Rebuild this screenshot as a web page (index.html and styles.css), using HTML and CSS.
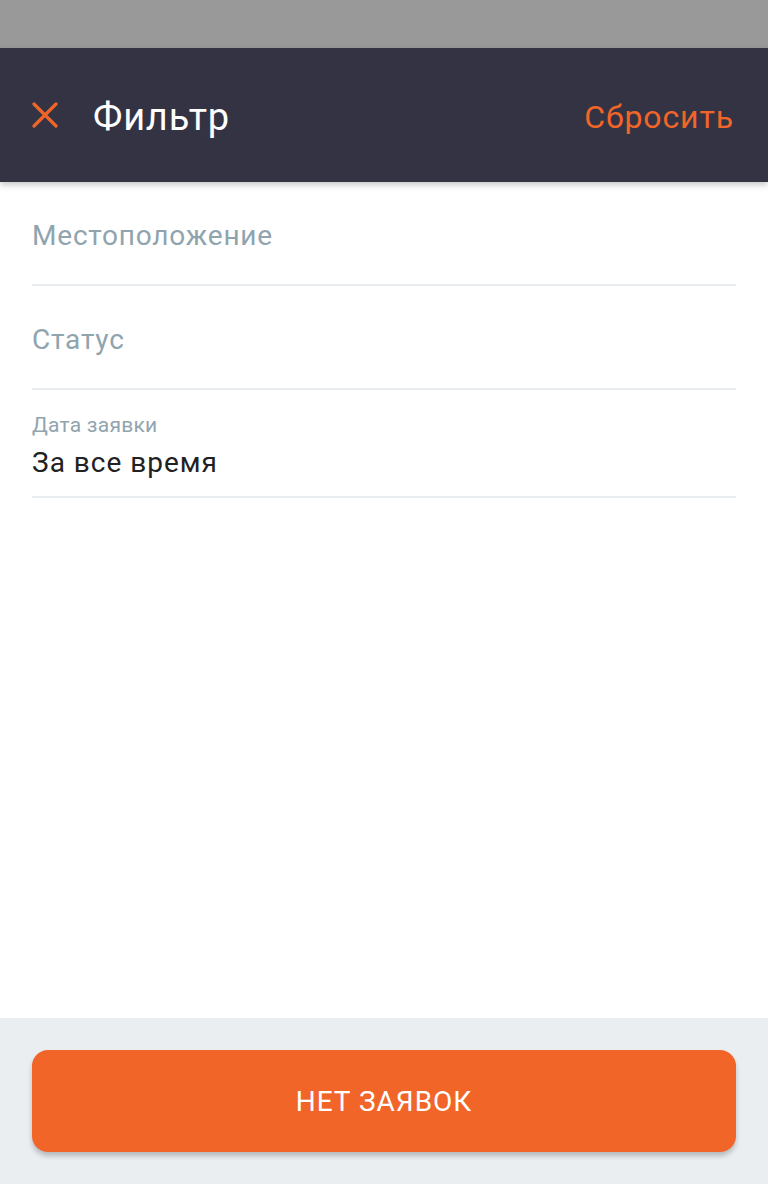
FILE: index.html
```html
<!DOCTYPE html>
<html lang="ru">
<head>
<meta charset="utf-8">
<link rel="stylesheet" href="styles.css">
</head>
<body>
<div class="screen">
  <div class="statusbar"></div>
  <header class="appbar">
    <div class="appbar-left">
      <svg class="close-icon" width="26" height="26" viewBox="0 0 26 26" aria-hidden="true">
        <path d="M2 2 L24 24 M24 2 L2 24" stroke="#f26529" stroke-width="3.2" stroke-linecap="round" fill="none"/>
      </svg>
      <h1 class="title">Фильтр</h1>
    </div>
    <button class="reset">Сбросить</button>
  </header>
  <main class="content">
    <div class="field">
      <span class="placeholder">Местоположение</span>
    </div>
    <div class="field">
      <span class="placeholder">Статус</span>
    </div>
    <div class="field field-filled">
      <span class="label">Дата заявки</span>
      <span class="value">За все время</span>
    </div>
  </main>
  <footer class="footer">
    <button class="primary">НЕТ ЗАЯВОК</button>
  </footer>
</div>
</body>
</html>
```
FILE: styles.css
```css
* { box-sizing: border-box; }
html, body {
  margin: 0;
  padding: 0;
  width: 768px;
  height: 1184px;
  overflow: hidden;
  font-family: Roboto, "Noto Sans", sans-serif;
  background: #ffffff;
}
.screen {
  display: flex;
  flex-direction: column;
  height: 1184px;
}
.statusbar {
  height: 48px;
  background: #999999;
  flex: none;
}
.appbar {
  height: 134px;
  flex: none;
  background: #333344;
  display: flex;
  align-items: center;
  justify-content: space-between;
  padding: 0 34px 0 32px;
  box-shadow: 0 3px 6px rgba(0,0,0,0.22);
  position: relative;
  z-index: 1;
}
.appbar-left {
  display: flex;
  align-items: center;
}
.close-icon {
  display: block;
  margin-top: 0;
}
.title {
  margin: 4px 0 0 35px;
  color: #ffffff;
  font-size: 38px;
  font-weight: 400;
  line-height: 1;
  letter-spacing: 0.8px;
}
.reset {
  background: none;
  border: 0;
  padding: 4px 0 0;
  color: #f26529;
  font-family: inherit;
  font-size: 32px;
  font-weight: 400;
  line-height: 1;
  letter-spacing: 0.9px;
}
.content {
  flex: 1;
  padding: 0 32px;
  background: #ffffff;
}
.field {
  height: 104px;
  border-bottom: 2px solid #e9edf0;
  display: flex;
  flex-direction: column;
  justify-content: center;
  padding-top: 5px;
}
.field-filled {
  height: 108px;
  justify-content: flex-start;
  padding-top: 25px;
}
.placeholder {
  color: #90a4ae;
  font-size: 28px;
  line-height: 1;
  letter-spacing: 0.8px;
}
.label {
  color: #90a4ae;
  font-size: 21px;
  line-height: 1;
  letter-spacing: 0.25px;
}
.value {
  color: #212121;
  font-size: 28px;
  line-height: 1;
  margin-top: 13px;
  letter-spacing: 1px;
}
.footer {
  height: 166px;
  flex: none;
  background: #ebeef1;
  padding: 32px 32px 0;
}
.primary {
  width: 100%;
  height: 102px;
  border: 0;
  border-radius: 16px;
  background: #f26529;
  color: #ffffff;
  font-family: inherit;
  font-size: 28px;
  font-weight: 400;
  letter-spacing: 1px;
  box-shadow: 0 4px 5px rgba(0,0,0,0.22);
}
```
